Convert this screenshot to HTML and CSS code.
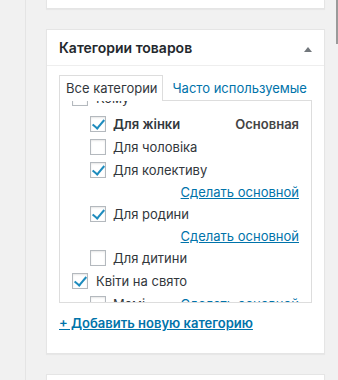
FILE: index.html
```html
<!DOCTYPE html>
<html lang="ru">
  <head>
    <meta charset="UTF-8" />
    <meta name="viewport" content="width=device-width, initial-scale=1.0" />
    <title>Категории товаров</title>
    <link rel="stylesheet" href="styles.css">
  </head>
  <body>
    <div class="rail"></div>
    <div class="main">
      <div class="card card-stub"></div>

      <div class="card">
        <div class="card-header">
          <h2>Категории товаров</h2>
          <span class="toggle"></span>
        </div>
        <div class="card-body">
          <ul class="tabs">
            <li class="tab active">Все категории</li>
            <li class="tab"><a href="#">Часто используемые</a></li>
          </ul>
          <div class="panel">
            <ul class="checklist">
              <li class="row top first">
                <span class="cb"></span><span class="label">Кому</span>
              </li>
              <li class="row child">
                <span class="cb checked"></span><span class="label bold">Для жінки</span>
                <span class="primary">Основная</span>
              </li>
              <li class="row child">
                <span class="cb"></span><span class="label">Для чоловіка</span>
              </li>
              <li class="row child">
                <span class="cb checked"></span><span class="label">Для колективу</span>
              </li>
              <li class="make-row"><a href="#">Сделать основной</a></li>
              <li class="row child">
                <span class="cb checked"></span><span class="label">Для родини</span>
              </li>
              <li class="make-row"><a href="#">Сделать основной</a></li>
              <li class="row child">
                <span class="cb"></span><span class="label">Для дитини</span>
              </li>
              <li class="row top">
                <span class="cb checked"></span><span class="label">Квіти на свято</span>
              </li>
              <li class="row child">
                <span class="cb"></span><span class="label">Мамі</span>
                <a class="make-inline" href="#">Сделать основной</a>
              </li>
            </ul>
          </div>
          <a class="add-new" href="#">+ Добавить новую категорию</a>
        </div>
      </div>

      <div class="card card-next"></div>
    </div>
    <div class="scroll-thumb"></div>
  </body>
</html>
```

FILE: styles.css
```css
* {
  margin: 0;
  padding: 0;
  box-sizing: border-box;
}

body {
  display: flex;
  min-height: 100vh;
  overflow: hidden;
  background-color: #f1f1f1;
  font-family: Inter, "Liberation Sans", Arial, sans-serif;
  font-size: 13px;
  color: #32373c;
}

a {
  color: #0073aa;
}

ul {
  list-style: none;
}

.rail {
  width: 26px;
  border-right: 1px solid #e4e4e4;
}

.main {
  width: 279px;
  margin-left: 20px;
}

.card {
  background-color: #fff;
  border: 1px solid #e5e5e5;
  box-shadow: 0 1px 1px rgba(0, 0, 0, 0.04);
}

.card-stub {
  height: 9px;
  border-top: none;
}

.card-next {
  height: 40px;
  margin-top: 20px;
}

.card + .card {
  margin-top: 20px;
}

.card-header {
  display: flex;
  align-items: center;
  height: 36px;
  padding: 0 12px;
  border-bottom: 1px solid #eee;
}

.card-header > h2 {
  font-size: 14px;
  font-weight: 600;
  color: #23282d;
}

.toggle {
  margin-left: auto;
  margin-top: 3px;
  width: 0;
  height: 0;
  border-left: 4.5px solid transparent;
  border-right: 4.5px solid transparent;
  border-bottom: 5px solid #72777c;
}

.card-body {
  padding: 9px 12px 21px;
}

.tabs {
  display: flex;
  margin-bottom: -1px;
  position: relative;
  z-index: 1;
}

.tab {
  line-height: 18px;
  padding: 3px 4px 3px 6px;
  border: 1px solid transparent;
  border-bottom: none;
}

.tab.active {
  background-color: #fff;
  border-color: #ddd;
  padding-bottom: 4px;
  color: #32373c;
}

.tab > a {
  text-decoration: none;
  margin-left: 3px;
}

.panel {
  height: 203px;
  border: 1px solid #ddd;
  overflow: hidden;
  padding: 0 12px;
}

.checklist {
  margin-top: -15px;
}

.row {
  display: flex;
  align-items: center;
  height: 23px;
}

.row.first {
  margin-bottom: 3px;
}

.row.child {
  padding-left: 18px;
}

.cb {
  flex: none;
  width: 16px;
  height: 16px;
  border: 1px solid #b4b9be;
  background-color: #fff;
  box-shadow: inset 0 1px 2px rgba(0, 0, 0, 0.1);
  margin-right: 7px;
  position: relative;
}

.row.top .cb {
  margin-right: 8px;
}

.cb.checked::after {
  content: "";
  position: absolute;
  left: 4px;
  top: 0px;
  width: 5px;
  height: 10px;
  border-right: 2.5px solid #1e8cbe;
  border-bottom: 2.5px solid #1e8cbe;
  transform: rotate(40deg);
}

.label.bold,
.primary {
  font-weight: 600;
}

.primary {
  margin-left: auto;
  color: #444;
}

.make-row {
  display: flex;
  align-items: center;
  justify-content: flex-end;
  height: 21px;
}

.make-inline {
  margin-left: auto;
}

.add-new {
  display: inline-block;
  margin-top: 11px;
  line-height: 18px;
  font-weight: 600;
}

.scroll-thumb {
  position: absolute;
  top: 0;
  right: 0;
  width: 2px;
  height: 44px;
  background-color: #9a9a9a;
}
```
